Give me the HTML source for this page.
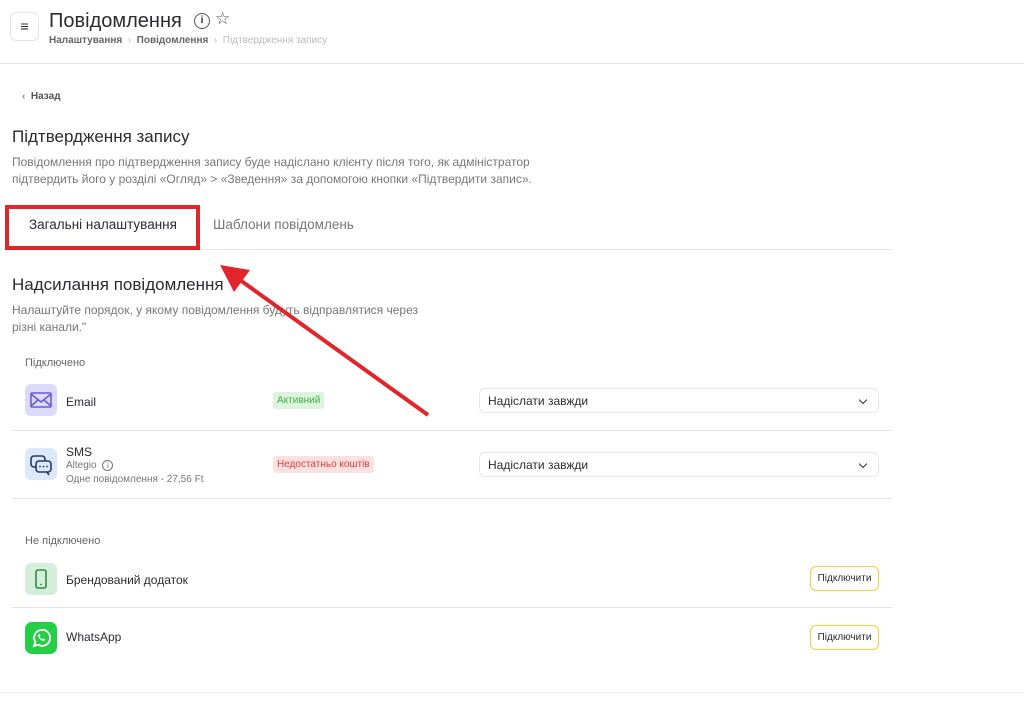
<!DOCTYPE html>
<html><head><meta charset="utf-8"><style>
*{margin:0;padding:0;box-sizing:border-box}
body{width:1024px;height:714px;background:#fff;font-family:"Liberation Sans",sans-serif;color:#2b2b33;position:relative;overflow:hidden}
.a{position:absolute;white-space:nowrap}
.hr{position:absolute;height:1px;background:#e6e6ee}
.ic{position:absolute;width:32px;height:32px;border-radius:6px;left:25px}
.sel{position:absolute;left:479px;width:400px;height:25px;border:1px solid #e4e4ee;border-radius:6px;font-size:12px;padding:5px 8px;color:#2b2b33}
.chev{position:absolute;right:12px;top:8px;width:6px;height:6px;border-right:1.5px solid #333;border-bottom:1.5px solid #333;transform:rotate(45deg)}
.btn{position:absolute;left:810px;width:69px;height:25px;border:1px solid #f3cc3a;border-radius:6px;font-size:10px;text-align:center;line-height:23px}
</style></head><body>
<div class="a" style="left:10px;top:12px;width:29px;height:29px;border:1px solid #e4e4ea;border-radius:6px;font-size:14px;text-align:center;line-height:27px;font-weight:bold">≡</div>
<div class="a" style="left:49px;top:10px;font-size:20px;color:#2b2b33">Повідомлення</div>
<div class="a" style="left:194px;top:13px;width:16px;height:16px;border:1.5px solid #555;border-radius:50%;font-size:10px;text-align:center;line-height:13px;font-weight:bold">i</div>
<div class="a" style="left:215px;top:9px;font-size:17px;color:#555">☆</div>
<div class="a" style="left:49px;top:35px;font-size:10px;color:#666;font-weight:bold">Налаштування <span style="color:#bbb;font-weight:normal">&nbsp;›&nbsp;</span> Повідомлення <span style="color:#bbb;font-weight:normal">&nbsp;›&nbsp; Підтвердження запису</span></div>
<div class="hr" style="left:0;top:63px;width:1024px"></div>
<div class="a" style="left:22px;top:91px;font-size:10px;color:#555;font-weight:bold"><span style="color:#888">‹</span>&nbsp;&nbsp;Назад</div>
<div class="a" style="left:12px;top:127px;font-size:17px">Підтвердження запису</div>
<div class="a" style="left:12px;top:154px;font-size:12px;color:#777;line-height:17px">Повідомлення про підтвердження запису буде надіслано клієнту після того, як адміністратор<br>підтвердить його у розділі «Огляд» &gt; «Зведення» за допомогою кнопки «Підтвердити запис».</div>
<div class="hr" style="left:12px;top:249px;width:880px"></div>
<div class="a" style="left:12px;top:247px;width:170px;height:3px;background:#f3cc3a"></div>
<div class="a" style="left:29px;top:217px;font-size:13.5px;color:#2b2b33">Загальні налаштування</div>
<div class="a" style="left:213px;top:217px;font-size:13.5px;color:#777">Шаблони повідомлень</div>
<div class="a" style="left:5px;top:205px;width:195px;height:45px;border:4px solid #e2252a"></div>
<div class="a" style="left:12px;top:275px;font-size:17px">Надсилання повідомлення</div>
<div class="a" style="left:12px;top:302px;font-size:12px;color:#777;line-height:17px">Налаштуйте порядок, у якому повідомлення будуть відправлятися через<br>різні канали."</div>
<div class="a" style="left:25px;top:357px;font-size:11px;color:#666">Підключено</div>
<div class="ic" style="top:384px;background:#dcd9fb"><svg width="32" height="32"><rect x="6" y="9" width="20" height="14" rx="1" fill="none" stroke="#6a5bd6" stroke-width="1.6"/><path d="M6 10l10 8 10-8M6 22l7-6M26 22l-7-6" fill="none" stroke="#6a5bd6" stroke-width="1.6"/></svg></div>
<div class="a" style="left:66px;top:395px;font-size:12px">Email</div>
<div class="a" style="left:273px;top:392px;background:#dcf3dc;color:#3fae4a;font-size:10px;padding:3px 4px;border-radius:3px">Активний</div>
<div class="sel" style="top:388px">Надіслати завжди<span class="chev"></span></div>
<div class="hr" style="left:12px;top:430px;width:880px"></div>
<div class="ic" style="top:448px;background:#dce8fb"><svg width="32" height="32"><rect x="6" y="8" width="14" height="11" rx="3" fill="none" stroke="#223a6a" stroke-width="1.6"/><rect x="11" y="13" width="15" height="11" rx="3" fill="#dce8fb" stroke="#223a6a" stroke-width="1.6"/><path d="M22 24l2 3" stroke="#223a6a" stroke-width="1.6"/><circle cx="15" cy="18.5" r=".9" fill="#223a6a"/><circle cx="18.5" cy="18.5" r=".9" fill="#223a6a"/><circle cx="22" cy="18.5" r=".9" fill="#223a6a"/></svg></div>
<div class="a" style="left:66px;top:445px;font-size:12px">SMS</div>
<div class="a" style="left:66px;top:460px;font-size:10px;color:#777">Altegio <span style="display:inline-block;width:11px;height:11px;border:1px solid #777;border-radius:50%;font-size:8px;text-align:center;line-height:9px;margin-left:3px">i</span></div>
<div class="a" style="left:66px;top:474px;font-size:10px;color:#777">Одне повідомлення - 27,56 Ft</div>
<div class="a" style="left:273px;top:456px;background:#fde0e0;color:#e03b3b;font-size:10px;padding:3px 4px;border-radius:3px">Недостатньо коштів</div>
<div class="sel" style="top:452px">Надіслати завжди<span class="chev"></span></div>
<div class="hr" style="left:12px;top:498px;width:880px"></div>
<div class="a" style="left:25px;top:535px;font-size:11px;color:#666">Не підключено</div>
<div class="ic" style="top:563px;background:#d5eed9"><svg width="32" height="32"><rect x="11" y="7" width="10" height="18" rx="2" fill="none" stroke="#2f8a45" stroke-width="1.6"/><circle cx="16" cy="21.5" r=".9" fill="#2f8a45"/></svg></div>
<div class="a" style="left:66px;top:573px;font-size:12px">Брендований додаток</div>
<div class="btn" style="top:566px">Підключити</div>
<div class="hr" style="left:12px;top:607px;width:880px"></div>
<div class="ic" style="top:622px;background:#25cf45;border-radius:7px"><svg width="32" height="32"><path d="M9 24l1.3-4A8 8 0 1 1 13 22.7z" fill="none" stroke="#fff" stroke-width="1.8"/><path d="M13 13c0 3 3 6 6 6l1.2-1.6-2-1-1 .8c-1-.5-2-1.5-2.5-2.5l.8-1-1-2z" fill="#fff"/></svg></div>
<div class="a" style="left:66px;top:630px;font-size:12px">WhatsApp</div>
<div class="btn" style="top:625px">Підключити</div>
<div class="hr" style="left:0;top:692px;width:1024px"></div>
<svg class="a" style="left:0;top:0" width="1024" height="714"><line x1="428" y1="415" x2="240" y2="280" stroke="#e2252a" stroke-width="4"/><polygon points="220,265 250,270 234,292" fill="#e2252a"/></svg>
</body></html>
